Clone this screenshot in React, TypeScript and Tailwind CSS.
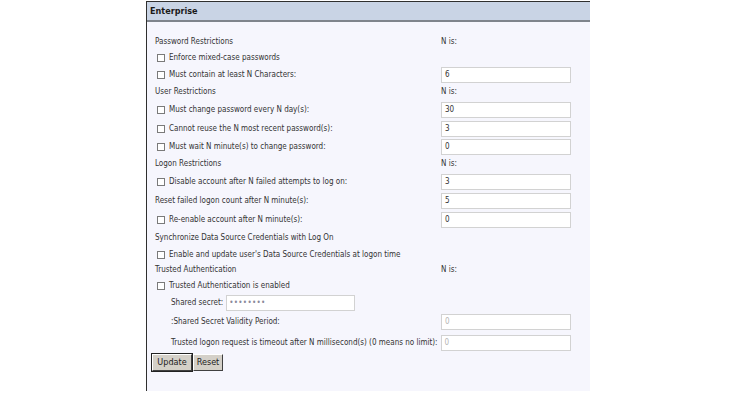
import React from "react";

const font = { fontFamily: '"DejaVu Sans Condensed", "Liberation Sans Narrow", "Liberation Sans", Arial, sans-serif' };

function Box() {
  return <span className="inline-block w-[8px] h-[8px] border border-[#7a7a7a] bg-white shrink-0 mr-[4px]" />;
}

function Section({ label, nis, h = "h-[16px]" }: { label: string; nis?: boolean; h?: string }) {
  return (
    <div className={`flex items-center ${h}`}>
      <div className="w-[294px] pl-[8px] whitespace-nowrap">{label}</div>
      {nis && <div>N is:</div>}
    </div>
  );
}

function Input({ value, disabled }: { value: string; disabled?: boolean }) {
  return (
    <div
      className={`w-[130px] h-[16px] border border-[#d2d2d2] bg-white flex items-center pl-[3px] shrink-0 ${
        disabled ? "text-[#b5b5b5]" : "text-[#333]"
      }`}
    >
      {value}
    </div>
  );
}

function CheckRow({ label, value, h = "h-[19px]" }: { label: string; value?: string; h?: string }) {
  return (
    <div className={`flex items-center ${h}`}>
      <div className="w-[294px] pl-[10px] flex items-center whitespace-nowrap">
        <Box />
        <span>{label}</span>
      </div>
      {value !== undefined && <Input value={value} />}
    </div>
  );
}

export default function App() {
  return (
    <div className="w-[743px] h-[399px] bg-white text-[#333] text-[8px] leading-none" style={font}>
      <div className="ml-[146px] pt-[1px]">
        <div className="w-[444px] h-[390px] border-l border-t border-[#2f2f2f] bg-[#f6f6fd]">
          <div className="h-[20px] bg-[#c9d4e5] border-b-2 border-[#7f848c] flex items-center pl-[3px] font-bold text-[9px] text-[#1a1a1a]">
            Enterprise
          </div>
          <div className="h-[12px]" />
          <Section label="Password Restrictions" nis />
          <CheckRow label="Enforce mixed-case passwords" h="h-[16px]" />
          <CheckRow label="Must contain at least N Characters:" value="6" h="h-[18px]" />
          <Section label="User Restrictions" nis />
          <CheckRow label="Must change password every N day(s):" value="30" />
          <CheckRow label="Cannot reuse the N most recent password(s):" value="3" />
          <CheckRow label="Must wait N minute(s) to change password:" value="0" h="h-[18px]" />
          <Section label="Logon Restrictions" nis />
          <CheckRow label="Disable account after N failed attempts to log on:" value="3" />
          <div className="flex items-center h-[19px]">
            <div className="w-[294px] pl-[8px] whitespace-nowrap">Reset failed logon count after N minute(s):</div>
            <Input value="5" />
          </div>
          <CheckRow label="Re-enable account after N minute(s):" value="0" />
          <Section label="Synchronize Data Source Credentials with Log On" h="h-[17px]" />
          <CheckRow label="Enable and update user's Data Source Credentials at logon time" h="h-[17px]" />
          <Section label="Trusted Authentication" nis h="h-[14px]" />
          <CheckRow label="Trusted Authentication is enabled" h="h-[17px]" />
          <div className="flex items-center h-[17px] pl-[24px]">
            <span className="mr-[3px] whitespace-nowrap">Shared secret:</span>
            <div className="w-[129px] h-[16px] border border-[#d2d2d2] bg-white flex items-center pl-[2px] text-[#8a8a9a] text-[8px] tracking-[0.3px]">
              ••••••••
            </div>
          </div>
          <div className="flex items-center h-[22px]">
            <div className="w-[294px] pl-[24px] whitespace-nowrap">:Shared Secret Validity Period:</div>
            <Input value="0" disabled />
          </div>
          <div className="flex items-center h-[20px]">
            <div className="pl-[24px] mr-[3px] whitespace-nowrap">Trusted logon request is timeout after N millisecond(s) (0 means no limit):</div>
            <Input value="0" disabled />
          </div>
          <div className="flex pl-[5px] pt-[1px]">
            <button className="h-[17px] w-[40px] bg-[#d4d0c8] border border-t-[#fff] border-l-[#fff] border-r-[#404040] border-b-[#404040] outline outline-1 outline-[#222] text-[9px] text-[#222] flex items-center justify-center">
              Update
            </button>
            <button className="h-[17px] w-[30px] ml-[1px] bg-[#d4d0c8] border border-t-[#fff] border-l-[#fff] border-r-[#404040] border-b-[#404040] text-[9px] text-[#222] flex items-center justify-center">
              Reset
            </button>
          </div>
        </div>
      </div>
    </div>
  );
}
